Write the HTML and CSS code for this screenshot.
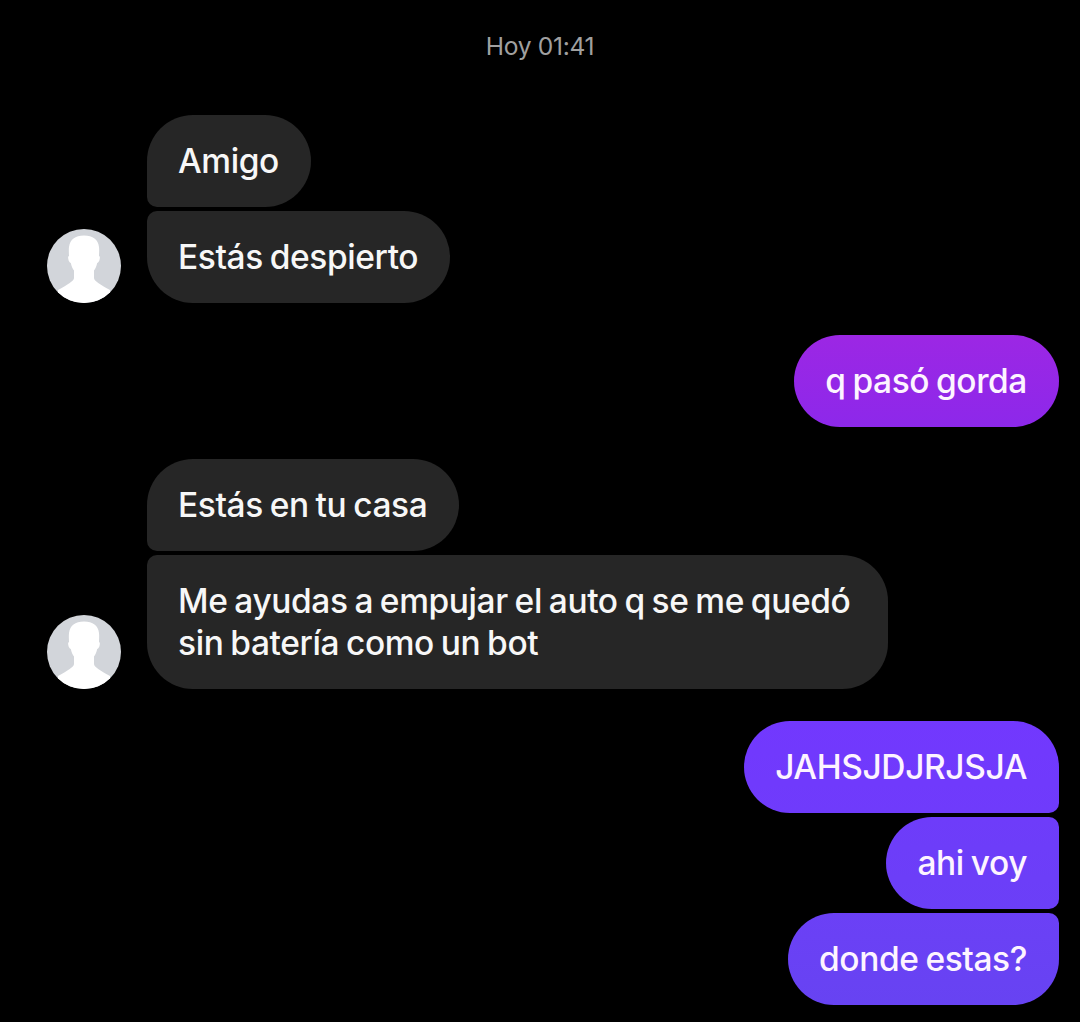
FILE: index.html
```html
<!DOCTYPE html>
<html lang="es">
<head>
<meta charset="utf-8">
<title>Chat</title>
<link rel="stylesheet" href="styles.css">
</head>
<body>
<main class="chat">
  <div class="time">Hoy 01:41</div>
  <section class="group in">
    <svg class="avatar" viewBox="0 0 74 74"><use href="#person"/></svg>
    <div class="stack">
      <div class="bubble first">Amigo</div>
      <div class="bubble last">Estás despierto</div>
    </div>
  </section>
  <section class="group out">
    <div class="stack">
      <div class="bubble magenta">q pasó gorda</div>
    </div>
  </section>
  <section class="group in">
    <svg class="avatar" viewBox="0 0 74 74"><use href="#person"/></svg>
    <div class="stack">
      <div class="bubble first">Estás en tu casa</div>
      <div class="bubble last wide">Me ayudas a empujar el auto q se me quedó<br>sin batería como un bot</div>
    </div>
  </section>
  <section class="group out">
    <div class="stack">
      <div class="bubble violet-1 first">JAHSJDJRJSJA</div>
      <div class="bubble violet-2 middle">ahi voy</div>
      <div class="bubble violet-3 last">donde estas?</div>
    </div>
  </section>
</main>
<svg class="defs" width="0" height="0" aria-hidden="true">
  <defs>
    <clipPath id="round"><circle cx="37" cy="37" r="37"/></clipPath>
    <g id="person" clip-path="url(#round)">
      <rect width="74" height="74" fill="#d2d5da"/>
      <path fill="#fff" d="M37 6.500C28 6.500 23 10.500 22 18C21.600 21 22 25 22 27C21 27.300 21 28.500 21.300 30C21.600 32 22.500 33.500 23.800 34C24.500 37 25.500 39.500 27 41.500L27 49C27 52 20 56 11 61L11 74L63 74L63 61C54 56 47 52 47 49L47 41.500C48.500 39.500 49.500 37 50.200 34C51.500 33.500 52.400 32 52.700 30C53 28.500 53 27.300 52 27C52 25 52.400 21 52 18C51 10.500 46 6.500 37 6.500Z"/>
    </g>
  </defs>
</svg>
</body>
</html>
```
FILE: styles.css
```css
* { box-sizing: border-box; }
html, body { margin: 0; height: 100%; background: #000; overflow: hidden; }
body { font-family: Inter, "Noto Sans", sans-serif; }
.chat {
  display: flex;
  flex-direction: column;
  gap: 32px;
  padding: 29px 21px 0 47px;
}
.time {
  align-self: center;
  margin-left: -26px;
  margin-bottom: 20px;
  font-size: 24.600px;
  line-height: 34px;
  color: #a0a0a0;
  letter-spacing: -0.3px;
}
.group { display: flex; align-items: flex-end; gap: 26px; }
.group.out { justify-content: flex-end; }
.avatar { width: 74px; height: 74px; flex: none; display: block; }
.stack { display: flex; flex-direction: column; gap: 4px; align-items: flex-start; }
.out .stack { align-items: flex-end; }
.bubble {
  padding: 25px 32px 25px 31px;
  font-size: 33.500px;
  line-height: 42px;
  font-weight: 500;
  color: #f7f7f7;
  letter-spacing: -0.4px;
  word-spacing: -1.700px;
  background: #262626;
  border-radius: 46px;
  white-space: nowrap;
}
.wide { padding-right: 38px; }
.in .first { border-bottom-left-radius: 10px; }
.in .last { border-top-left-radius: 10px; }
.out .first { border-bottom-right-radius: 10px; }
.out .middle { border-radius: 46px 10px 10px 46px; }
.out .last { border-top-right-radius: 10px; }
.out .bubble { color: #fdf4ff; }
.magenta { background: linear-gradient(180deg, #9c27e4, #8d28ea); }
.violet-1 { background: linear-gradient(180deg, #7238fe, #6f3bfb); }
.violet-2 { background: linear-gradient(180deg, #6e3cfa, #6b3ff7); }
.violet-3 { background: linear-gradient(180deg, #6b40f6, #6743f2); }
.defs { position: absolute; }
```
